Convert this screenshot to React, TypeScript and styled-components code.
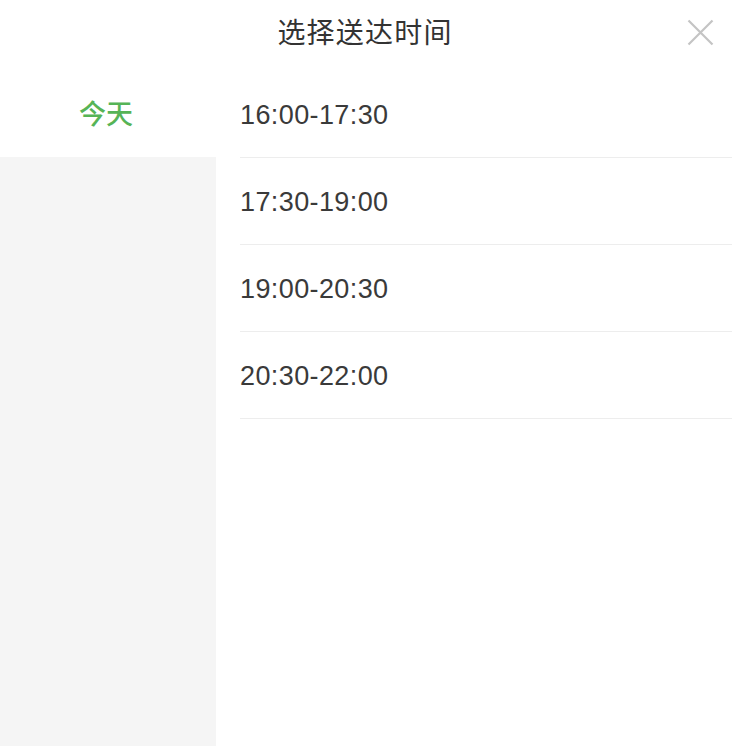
import React from "react";
import styled, { createGlobalStyle } from "styled-components";

const Global = createGlobalStyle`
  html, body { margin: 0; padding: 0; background: #fff; }
  body { font-family: "Liberation Sans", "Noto Sans CJK SC", sans-serif; }
`;

const Page = styled.div`
  width: 732px;
  height: 746px;
  display: flex;
  flex-direction: column;
  background: #fff;
  overflow: hidden;
`;

const Header = styled.div`
  position: relative;
  height: 71px;
  flex: none;
  display: flex;
  justify-content: center;
  align-items: flex-start;
  padding-top: 11px;
  box-sizing: border-box;
`;

const Title = styled.div`
  font-family: "Noto Sans CJK SC", sans-serif;
  font-size: 28px;
  line-height: 40px;
  color: #333;
  letter-spacing: 1.2px;
  padding-right: 2px;
`;

const Close = styled.button`
  position: absolute;
  right: 18px;
  top: 19px;
  width: 27px;
  height: 27px;
  padding: 0;
  border: 0;
  background: none;
  cursor: pointer;
`;

const Body = styled.div`
  flex: 1;
  display: flex;
`;

const Side = styled.div`
  width: 216px;
  flex: none;
  background: #f5f5f5;
`;

const SideItem = styled.div<{ $active?: boolean }>`
  height: 86px;
  display: flex;
  align-items: center;
  justify-content: center;
  background: ${(p) => (p.$active ? "#fff" : "transparent")};
  color: ${(p) => (p.$active ? "#56b456" : "#333")};
  font-family: "Noto Sans CJK SC", sans-serif;
  font-size: 27px;
  font-weight: 500;
  padding-right: 4px;
  padding-bottom: 3px;
  box-sizing: border-box;
`;

const List = styled.div`
  flex: 1;
  padding-left: 24px;
`;

const Row = styled.div`
  height: 87px;
  box-sizing: border-box;
  border-bottom: 1px solid #ededed;
  display: flex;
  align-items: center;
  font-size: 27px;
  letter-spacing: 0.4px;
  color: #3a3a3a;
  padding-top: 3px;
  padding-left: 0;
`;

const times = ["16:00-17:30", "17:30-19:00", "19:00-20:30", "20:30-22:00"];

export default function App() {
  return (
    <Page>
      <Global />
      <Header>
        <Title>选择送达时间</Title>
        <Close aria-label="close">
          <svg width="27" height="27" viewBox="0 0 27 27">
            <path d="M1.5 1.5 L25.5 25.5 M25.5 1.5 L1.5 25.5" stroke="#c4c4c4" strokeWidth="2.2" fill="none" />
          </svg>
        </Close>
      </Header>
      <Body>
        <Side>
          <SideItem $active>今天</SideItem>
        </Side>
        <List>
          {times.map((t) => (
            <Row key={t}>{t}</Row>
          ))}
        </List>
      </Body>
    </Page>
  );
}
